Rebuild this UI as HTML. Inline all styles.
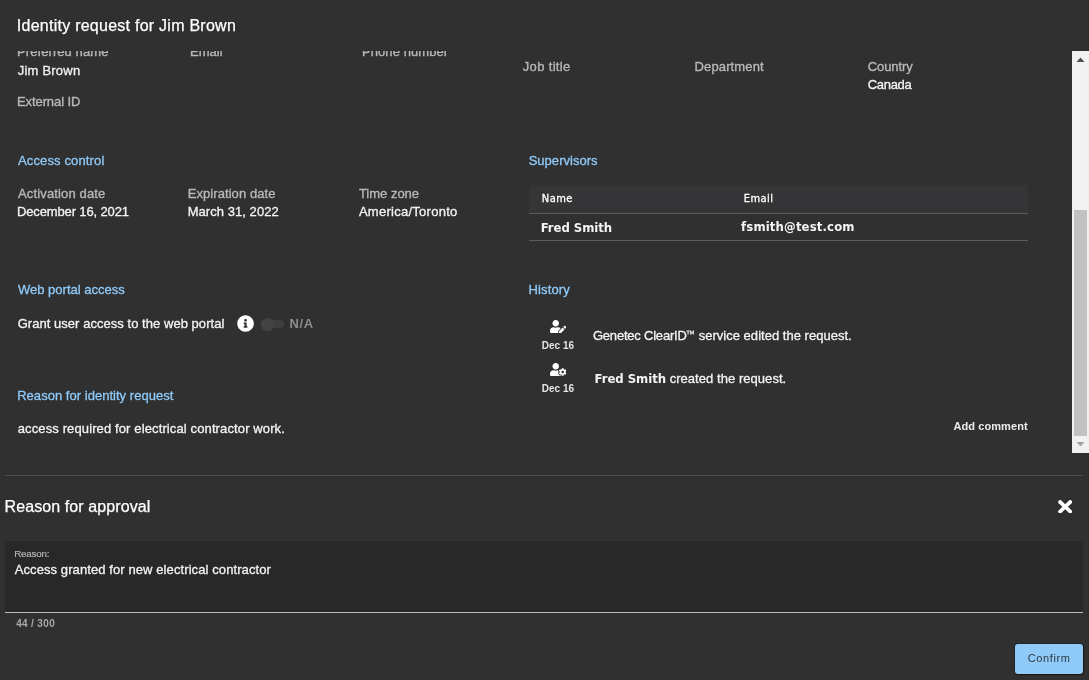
<!DOCTYPE html>
<html lang="en">
<head>
<meta charset="utf-8">
<title>Identity request for Jim Brown</title>
<style>
html,body{margin:0;padding:0;}
html{background:#303030;}
body{width:1089px;height:680px;overflow:hidden;background:#303030;position:relative;font-family:"Liberation Sans",sans-serif;}
.t{position:absolute;white-space:nowrap;display:block;}
.abs{position:absolute;}
#scroll{position:absolute;left:0;top:51px;width:1089px;height:402px;overflow:hidden;will-change:transform;}
#ptext{position:absolute;left:0;top:0;width:1089px;height:680px;will-change:transform;pointer-events:none;}
#sb{position:absolute;left:1072px;top:0;width:17px;height:402px;background:#f1f1f1;}
#sb .thumb{position:absolute;left:2px;top:159px;width:13px;height:226px;background:#c1c1c1;}
#sb svg{position:absolute;left:0;}
.thead{position:absolute;left:529px;top:134px;width:499px;height:28px;background:#353537;}
.hline{position:absolute;left:529px;width:499px;height:1px;background:#5c5c5c;}
.divider{position:absolute;left:5px;top:475px;width:1078px;height:1px;background:#4e4e4e;}
.field{position:absolute;left:5px;top:541px;width:1078px;height:72px;background:#282828;border-radius:4px 4px 0 0;border-bottom:1px solid #bdbdbd;box-sizing:border-box;}
.btn{position:absolute;left:1015px;top:644px;width:68px;height:30px;background:#90caf9;border-radius:3px;box-shadow:0 0 0 1px rgba(20,14,10,.35),1px 1px 1px rgba(15,10,5,.6);}
.track{position:absolute;left:263px;top:269px;width:21px;height:8px;border-radius:4px;background:#3e3e3e;}
.knob{position:absolute;left:261px;top:267px;width:12.5px;height:12.5px;border-radius:50%;background:#434343;}
</style>
</head>
<body>

<!-- scrollable details area -->
<div id="scroll">
<div class="thead"></div>
<div class="hline" style="top:162px"></div>
<div class="hline" style="top:189px"></div>
<span class="t" style="left:17.00px;top:-8.00px;font:400 13px/17px 'Liberation Sans', sans-serif;color:#b8b8b8;letter-spacing:0.082px;-webkit-text-stroke:0.35px #b8b8b8">Preferred name</span>
<span class="t" style="left:190.00px;top:-8.00px;font:400 13px/17px 'Liberation Sans', sans-serif;color:#b8b8b8;letter-spacing:0.033px;-webkit-text-stroke:0.35px #b8b8b8">Email</span>
<span class="t" style="left:362.00px;top:-8.00px;font:400 13px/17px 'Liberation Sans', sans-serif;color:#b8b8b8;letter-spacing:0.073px;-webkit-text-stroke:0.35px #b8b8b8">Phone number</span>
<span class="t" style="left:17.71px;top:11.00px;font:400 13px/17px 'Liberation Sans', sans-serif;color:#f4f4f4;letter-spacing:0.223px;-webkit-text-stroke:0.3px #f4f4f4">Jim Brown</span>
<span class="t" style="left:17.00px;top:42.00px;font:400 13px/17px 'Liberation Sans', sans-serif;color:#b8b8b8;letter-spacing:-0.096px;-webkit-text-stroke:0.35px #b8b8b8">External ID</span>
<span class="t" style="left:522.74px;top:7.00px;font:400 13px/17px 'Liberation Sans', sans-serif;color:#b8b8b8;letter-spacing:0.344px;-webkit-text-stroke:0.35px #b8b8b8">Job title</span>
<span class="t" style="left:694.50px;top:7.00px;font:400 13px/17px 'Liberation Sans', sans-serif;color:#b8b8b8;letter-spacing:0.139px;-webkit-text-stroke:0.35px #b8b8b8">Department</span>
<span class="t" style="left:867.69px;top:7.00px;font:400 13px/17px 'Liberation Sans', sans-serif;color:#b8b8b8;letter-spacing:-0.068px;-webkit-text-stroke:0.35px #b8b8b8">Country</span>
<span class="t" style="left:867.66px;top:25.00px;font:400 13px/17px 'Liberation Sans', sans-serif;color:#f4f4f4;letter-spacing:-0.286px;-webkit-text-stroke:0.3px #f4f4f4">Canada</span>
<span class="t" style="left:18.00px;top:101.00px;font:400 13px/17px 'Liberation Sans', sans-serif;color:#90caf9;letter-spacing:0.135px;-webkit-text-stroke:0.3px #90caf9">Access control</span>
<span class="t" style="left:18.00px;top:134.00px;font:400 13px/17px 'Liberation Sans', sans-serif;color:#b8b8b8;letter-spacing:0.148px;-webkit-text-stroke:0.35px #b8b8b8">Activation date</span>
<span class="t" style="left:17.00px;top:152.00px;font:400 13px/17px 'Liberation Sans', sans-serif;color:#f4f4f4;letter-spacing:-0.137px;-webkit-text-stroke:0.3px #f4f4f4">December 16, 2021</span>
<span class="t" style="left:187.70px;top:134.00px;font:400 13px/17px 'Liberation Sans', sans-serif;color:#b8b8b8;letter-spacing:0.071px;-webkit-text-stroke:0.35px #b8b8b8">Expiration date</span>
<span class="t" style="left:187.70px;top:152.00px;font:400 13px/17px 'Liberation Sans', sans-serif;color:#f4f4f4;letter-spacing:0.052px;-webkit-text-stroke:0.3px #f4f4f4">March 31, 2022</span>
<span class="t" style="left:358.90px;top:134.00px;font:400 13px/17px 'Liberation Sans', sans-serif;color:#b8b8b8;letter-spacing:-0.004px;-webkit-text-stroke:0.35px #b8b8b8">Time zone</span>
<span class="t" style="left:358.90px;top:152.00px;font:400 13px/17px 'Liberation Sans', sans-serif;color:#f4f4f4;letter-spacing:0.268px;-webkit-text-stroke:0.3px #f4f4f4">America/Toronto</span>
<span class="t" style="left:528.67px;top:101.00px;font:400 13px/17px 'Liberation Sans', sans-serif;color:#90caf9;letter-spacing:0.028px;-webkit-text-stroke:0.3px #90caf9">Supervisors</span>
<span class="t" style="left:541.80px;top:140.00px;font:400 11px/15px 'DejaVu Sans Condensed', 'Liberation Sans', sans-serif;color:#ffffff;letter-spacing:0.445px;-webkit-text-stroke:0.3px #ffffff">Name</span>
<span class="t" style="left:743.80px;top:140.00px;font:400 11px/15px 'DejaVu Sans Condensed', 'Liberation Sans', sans-serif;color:#ffffff;letter-spacing:0.452px;-webkit-text-stroke:0.3px #ffffff">Email</span>
<span class="t" style="left:540.75px;top:168.00px;font:700 13px/17px 'DejaVu Sans Condensed', 'Liberation Sans', sans-serif;color:#f4f4f4;letter-spacing:-0.056px">Fred Smith</span>
<span class="t" style="left:741.10px;top:167.20px;font:700 13px/17px 'DejaVu Sans Condensed', 'Liberation Sans', sans-serif;color:#f4f4f4;letter-spacing:0.133px">fsmith@test.com</span>
<span class="t" style="left:18.00px;top:230.00px;font:400 13px/17px 'Liberation Sans', sans-serif;color:#90caf9;letter-spacing:-0.003px;-webkit-text-stroke:0.3px #90caf9">Web portal access</span>
<span class="t" style="left:528.40px;top:230.40px;font:400 13px/17px 'Liberation Sans', sans-serif;color:#90caf9;letter-spacing:0.153px;-webkit-text-stroke:0.3px #90caf9">History</span>
<span class="t" style="left:17.65px;top:264.00px;font:400 13px/17px 'Liberation Sans', sans-serif;color:#f4f4f4;letter-spacing:0.043px;-webkit-text-stroke:0.3px #f4f4f4">Grant user access to the web portal</span>
<span class="t" style="left:289.39px;top:264.00px;font:700 13px/17px 'Liberation Sans', sans-serif;color:#8c8c8c;letter-spacing:0.663px">N/A</span>
<span class="t" style="left:592.95px;top:276.00px;font:400 13px/17px 'Liberation Sans', sans-serif;color:#f4f4f4;letter-spacing:-0.211px;-webkit-text-stroke:0.3px #f4f4f4">Genetec ClearID</span>
<span class="t" style="left:685.80px;top:277.40px;font:400 9px/13px 'Liberation Sans', sans-serif;color:#f4f4f4;letter-spacing:0.496px;-webkit-text-stroke:0.2px #f4f4f4">™</span>
<span class="t" style="left:698.66px;top:276.00px;font:400 13px/17px 'Liberation Sans', sans-serif;color:#f4f4f4;letter-spacing:0.022px;-webkit-text-stroke:0.3px #f4f4f4">service edited the request.</span>
<span class="t" style="left:541.83px;top:288.20px;font:700 10px/14px 'Liberation Sans', sans-serif;color:#e6e6e6;letter-spacing:-0.007px">Dec 16</span>
<span class="t" style="left:594.60px;top:318.70px;font:700 13px/17px 'DejaVu Sans Condensed', 'Liberation Sans', sans-serif;color:#f4f4f4;letter-spacing:-0.044px">Fred Smith</span>
<span class="t" style="left:669.64px;top:318.70px;font:400 13px/17px 'Liberation Sans', sans-serif;color:#f4f4f4;letter-spacing:0.051px;-webkit-text-stroke:0.3px #f4f4f4">created the request.</span>
<span class="t" style="left:541.83px;top:331.20px;font:700 10px/14px 'Liberation Sans', sans-serif;color:#e6e6e6;letter-spacing:-0.007px">Dec 16</span>
<span class="t" style="left:17.20px;top:336.00px;font:400 13px/17px 'Liberation Sans', sans-serif;color:#90caf9;letter-spacing:0.030px;-webkit-text-stroke:0.3px #90caf9">Reason for identity request</span>
<span class="t" style="left:17.71px;top:369.00px;font:400 13px/17px 'Liberation Sans', sans-serif;color:#f4f4f4;letter-spacing:0.122px;-webkit-text-stroke:0.3px #f4f4f4">access required for electrical contractor work.</span>
<span class="t" style="left:953.47px;top:368.00px;font:700 11px/15px 'Liberation Sans', sans-serif;color:#ececec;letter-spacing:0.081px">Add comment</span>

<!-- info icon -->
<svg class="abs" style="left:236.95px;top:263.85px" width="17.1" height="17.1" viewBox="0 0 512 512"><path fill="#ffffff" d="M256 8C119.043 8 8 119.083 8 256c0 136.997 111.043 248 248 248s248-111.003 248-248C504 119.083 392.957 8 256 8zm0 110c23.196 0 42 18.804 42 42s-18.804 42-42 42-42-18.804-42-42 18.804-42 42-42zm56 254c0 6.627-5.373 12-12 12h-88c-6.627 0-12-5.373-12-12v-24c0-6.627 5.373-12 12-12h12v-64h-12c-6.627 0-12-5.373-12-12v-24c0-6.627 5.373-12 12-12h64c6.627 0 12 5.373 12 12v100h12c6.627 0 12 5.373 12 12v24z"/></svg>
<!-- disabled toggle -->
<div class="track"></div><div class="knob"></div>

<!-- history icons -->
<svg class="abs" style="left:549.7px;top:268.8px" width="16.4" height="13.1" viewBox="0 0 640 512"><path fill="#ffffff" d="M224 256c70.700 0 128-57.300 128-128S294.700 0 224 0 96 57.300 96 128s57.300 128 128 128zm89.600 32h-16.700c-22.200 10.200-46.900 16-72.900 16s-50.600-5.800-72.900-16h-16.700C60.200 288 0 348.200 0 422.400V464c0 26.500 21.500 48 48 48h274.900c-2.400-6.800-3.400-14-2.600-21.300l6.800-60.900 1.200-11.100 7.900-7.900 77.300-77.300c-24.500-27.700-60-45.500-99.900-45.500zm45.300 145.300l-6.800 61c-1.100 10.200 7.500 18.800 17.600 17.600l60.900-6.800 137.900-137.900-71.700-71.700-137.900 137.800zM633 268.900L595.100 231c-9.300-9.300-24.500-9.300-33.800 0l-37.800 37.800-4.100 4.100 71.800 71.700 41.800-41.800c9.300-9.400 9.300-24.500 0-33.900z"/></svg>
<svg class="abs" style="left:549.7px;top:311.8px" width="16.4" height="13.1" viewBox="0 0 640 512"><path fill="#ffffff" d="M610.500 373.300c2.600-14.100 2.600-28.500 0-42.600l25.800-14.900c3-1.700 4.300-5.200 3.300-8.500-6.700-21.600-18.200-41.200-33.200-57.400-2.300-2.500-6-3.100-9-1.400l-25.800 14.900c-10.900-9.300-23.400-16.500-36.900-21.300v-29.800c0-3.400-2.400-6.400-5.700-7.100-22.300-5-45-4.800-66.200 0-3.300.7-5.700 3.700-5.700 7.100v29.800c-13.500 4.800-26 12-36.900 21.300l-25.800-14.900c-2.900-1.700-6.700-1.100-9 1.400-15 16.200-26.500 35.800-33.200 57.400-1 3.300.4 6.800 3.300 8.500l25.800 14.900c-2.600 14.100-2.600 28.500 0 42.600l-25.800 14.900c-3 1.700-4.300 5.200-3.300 8.500 6.700 21.600 18.200 41.100 33.200 57.400 2.300 2.500 6 3.100 9 1.400l25.800-14.900c10.900 9.300 23.400 16.500 36.900 21.300v29.800c0 3.400 2.400 6.400 5.700 7.100 22.300 5 45 4.800 66.200 0 3.300-.7 5.700-3.700 5.700-7.100v-29.800c13.500-4.800 26-12 36.900-21.300l25.800 14.900c2.900 1.700 6.700 1.100 9-1.400 15-16.200 26.500-35.800 33.200-57.400 1-3.300-.4-6.800-3.300-8.500l-25.800-14.900zM496 400.500c-26.800 0-48.500-21.800-48.500-48.500s21.800-48.500 48.500-48.500 48.500 21.800 48.500 48.500-21.700 48.500-48.500 48.500zM224 256c70.700 0 128-57.300 128-128S294.700 0 224 0 96 57.300 96 128s57.300 128 128 128zm201.200 226.500c-2.300-1.200-4.600-2.600-6.800-3.900l-7.900 4.600c-6 3.400-12.800 5.300-19.600 5.300-10.900 0-21.400-4.600-28.900-12.600-18.300-19.800-32.300-43.900-40.200-69.600-5.500-17.700 1.900-36.400 17.900-45.700l7.900-4.600c-.1-2.600-.1-5.200 0-7.800l-7.900-4.600c-16-9.200-23.400-28-17.900-45.700.9-2.900 2.200-5.800 3.200-8.700-3.800-.3-7.500-1.200-11.400-1.200h-16.700c-22.200 10.200-46.900 16-72.900 16s-50.600-5.800-72.900-16h-16.700C60.200 288 0 348.200 0 422.400V464c0 26.500 21.500 48 48 48h352c10.100 0 19.500-3.200 27.200-8.500-1.200-3.800-2-7.700-2-11.800v-9.200z"/></svg>

<!-- scrollbar -->
<div id="sb">
<svg style="top:0" width="17" height="17" viewBox="0 0 17 17"><path fill="#505050" d="M4.500 11 L8.500 6.500 L12.500 11 Z"/></svg>
<div class="thumb"></div>
<svg style="top:385px" width="17" height="17" viewBox="0 0 17 17"><path fill="#a3a3a3" d="M4.500 6 L8.500 10.500 L12.500 6 Z"/></svg>
</div>
</div>

<!-- approval section -->
<div class="divider"></div>
<svg class="abs" style="left:1058px;top:499.800px" width="14.400" height="13.600" viewBox="0 80 352 352" preserveAspectRatio="none"><path fill="#ffffff" d="M242.720 256l100.070-100.070c12.280-12.280 12.280-32.190 0-44.480l-22.240-22.240c-12.280-12.280-32.190-12.280-44.480 0L176 189.280 75.930 89.210c-12.280-12.280-32.190-12.280-44.480 0L9.210 111.450c-12.280 12.280-12.280 32.190 0 44.480L109.280 256 9.210 356.070c-12.280 12.280-12.280 32.190 0 44.480l22.240 22.240c12.280 12.280 32.200 12.280 44.480 0L176 322.720l100.070 100.070c12.280 12.280 32.200 12.280 44.480 0l22.240-22.240c12.280-12.280 12.280-32.190 0-44.480L242.720 256z"/></svg>
<div class="field"></div>
<div class="btn"></div>
<!-- page-level text -->
<div id="ptext">
<span class="t" style="left:16.83px;top:15.50px;font:400 16px/20px 'Liberation Sans', sans-serif;color:#ffffff;letter-spacing:0.252px;-webkit-text-stroke:0.25px #ffffff">Identity request for Jim Brown</span>
<span class="t" style="left:4.55px;top:496.80px;font:400 16px/20px 'Liberation Sans', sans-serif;color:#ffffff;letter-spacing:0.092px;-webkit-text-stroke:0.25px #ffffff">Reason for approval</span>
<span class="t" style="left:14.25px;top:546.90px;font:400 9.75px/13px 'Liberation Sans', sans-serif;color:#b8b8b8;letter-spacing:-0.175px;-webkit-text-stroke:0.15px #b8b8b8">Reason:</span>
<span class="t" style="left:14.70px;top:561.30px;font:400 13px/17px 'Liberation Sans', sans-serif;color:#f4f4f4;letter-spacing:0.093px;-webkit-text-stroke:0.3px #f4f4f4">Access granted for new electrical contractor</span>
<span class="t" style="left:16.17px;top:617.30px;font:700 10px/14px 'Liberation Sans', sans-serif;color:#a8a8a8;letter-spacing:0.343px">44 / 300</span>
<span class="t" style="left:1027.70px;top:650.70px;font:400 11px/15px 'Liberation Sans', sans-serif;color:#2c3942;letter-spacing:0.630px">Confirm</span>
</div>
</body>
</html>
